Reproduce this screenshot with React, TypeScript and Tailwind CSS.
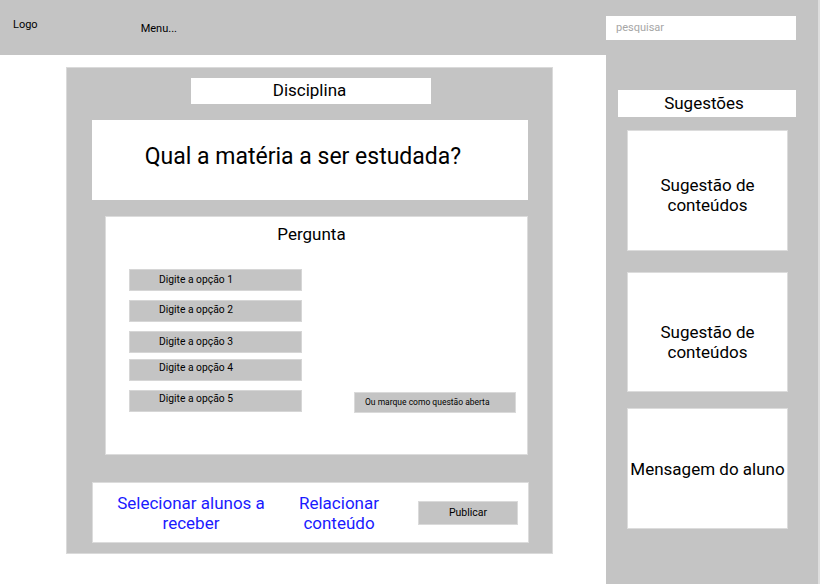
import React from "react";

const font = { fontFamily: "Roboto, 'Noto Sans', sans-serif" };

function Option({ label, mt, pb }: { label: string; mt: string; pb: string }) {
  return (
    <div className={`${mt} ${pb} h-[22px] w-[173px] bg-[#c4c4c4] border border-[#d6d6d6] pl-[29px] flex items-center text-[10.3px] text-black`}>
      {label}
    </div>
  );
}

function Card({ children, cls }: { children: React.ReactNode; cls: string }) {
  return (
    <div className={`${cls} ml-[21px] w-[161px] bg-white border border-[#dcdcdc] flex items-center justify-center text-center text-[17px] leading-[20px] text-black`}>
      {children}
    </div>
  );
}

export default function App() {
  return (
    <div className="w-[822px] h-[584px] flex bg-white overflow-hidden" style={font}>
      {/* Left column */}
      <div className="w-[606px] flex flex-col">
        <div className="h-[55px] bg-[#c4c4c4] relative flex items-start text-[11px] text-black">
          <span className="ml-[13px] mt-[17px]">Logo</span>
          <span className="ml-[103px] mt-[21px]">Menu...</span>
        </div>
        <div className="ml-[66px] mt-[12px] w-[487px] h-[487px] bg-[#c4c4c4] border border-[#dadada] flex flex-col">
          <div className="ml-[124px] mt-[10px] w-[240px] h-[26px] bg-white flex items-center justify-center text-[17px] text-black pr-[3px]">
            Disciplina
          </div>
          <div className="ml-[25px] mt-[16px] w-[436px] h-[80px] bg-white flex items-center justify-center text-[23px] text-black pb-[5px] pr-[14px]">
            Qual a matéria a ser estudada?
          </div>
          <div className="ml-[38px] mt-[16px] w-[423px] h-[239px] bg-white border border-[#dcdcdc] flex flex-col relative">
            <div className="text-center text-[17px] mt-[7px] leading-[20px] text-black pr-[10px]">Pergunta</div>
            <div className="ml-[23px] flex flex-col">
              <Option label="Digite a opção 1" mt="mt-[25px]" pb="pb-[1px]" />
              <Option label="Digite a opção 2" mt="mt-[9px]" pb="pb-[3px]" />
              <Option label="Digite a opção 3" mt="mt-[9px]" pb="pb-[0px]" />
              <Option label="Digite a opção 4" mt="mt-[6px]" pb="pb-[5px]" />
              <Option label="Digite a opção 5" mt="mt-[9px]" pb="pb-[4px]" />
            </div>
            <div className="absolute left-[248px] top-[175px] w-[162px] h-[21px] bg-[#c4c4c4] border border-[#dadada] pl-[10px] flex items-center text-[8.5px] text-black">
              Ou marque como questão aberta
            </div>
          </div>
          <div className="ml-[25px] mt-[27px] w-[437px] h-[61px] bg-white border border-[#dcdcdc] flex items-center text-[17px] leading-[20px] text-[#1a1aff]">
            <div className="w-[160px] ml-[18px] text-center">Selecionar alunos a receber</div>
            <div className="w-[110px] ml-[13px] text-center">Relacionar conteúdo</div>
            <div className="ml-[24px] w-[100px] h-[24px] bg-[#c4c4c4] border border-[#dadada] flex items-center justify-center text-[10.5px] text-black">
              Publicar
            </div>
          </div>
        </div>
      </div>
      {/* Right column */}
      <div className="w-[214px] h-[584px] bg-[#c4c4c4] flex flex-col border-r-2 border-[#dedede]">
        <div className="mt-[16px] w-[190px] h-[24px] bg-white flex items-center pl-[10px] text-[11px] text-[#a6a6a6]">
          pesquisar
        </div>
        <div className="ml-[12px] mt-[50px] w-[178px] h-[27px] bg-white flex items-center justify-center text-[17px] text-black pr-[6px]">
          Sugestões
        </div>
        <Card cls="mt-[13px] h-[121px] pt-[9px]">Sugestão de<br />conteúdos</Card>
        <Card cls="mt-[21px] h-[120px] pt-[20px]">Sugestão de<br />conteúdos</Card>
        <Card cls="mt-[16px] h-[121px] pt-[1px]">Mensagem do aluno</Card>
      </div>
    </div>
  );
}
